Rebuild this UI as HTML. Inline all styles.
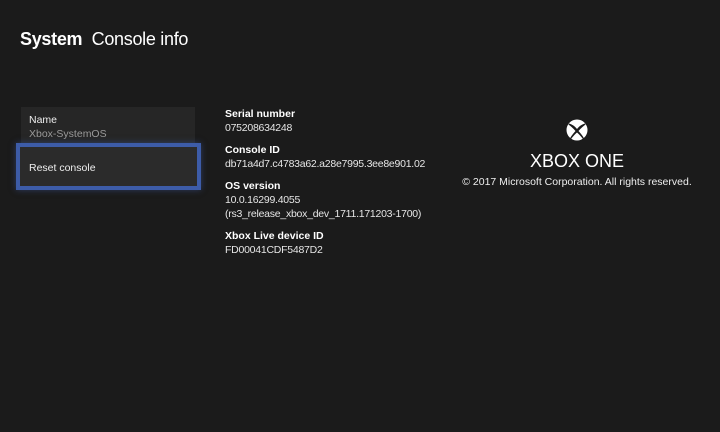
<!DOCTYPE html><html><head><style>
body{margin:0;width:720px;height:432px;background:#1b1b1b;color:#fff;font-family:"Liberation Sans",sans-serif;position:relative;overflow:hidden}
.a{position:absolute;white-space:nowrap}
.l{font-size:10.5px;font-weight:bold;color:#fff}
.v{font-size:10.5px;color:#e6e6e6;letter-spacing:-0.25px}
</style></head><body>
<div class="a" style="left:20px;top:29px;font-size:18px;letter-spacing:-0.3px"><b>System</b>&nbsp; Console info</div>
<div class="a" style="left:21px;top:107px;width:174px;height:38px;background:#262626"></div>
<div class="a" style="left:29px;top:114px;font-size:10.5px;color:#eee">Name</div>
<div class="a" style="left:29px;top:128px;font-size:10.5px;color:#9a9a9a">Xbox-SystemOS</div>
<div class="a" style="left:16px;top:143px;width:177px;height:39px;background:#2b2b2b;border:4px solid #3d5ca8;box-shadow:0 0 6px rgba(61,92,168,.5)"></div>
<div class="a" style="left:29px;top:162px;font-size:10.5px;color:#eee">Reset console</div>
<div class="a l" style="left:225px;top:108px">Serial number</div>
<div class="a v" style="left:225px;top:122px">075208634248</div>
<div class="a l" style="left:225px;top:144px">Console ID</div>
<div class="a v" style="left:225px;top:158px">db71a4d7.c4783a62.a28e7995.3ee8e901.02</div>
<div class="a l" style="left:225px;top:180px">OS version</div>
<div class="a v" style="left:225px;top:194px">10.0.16299.4055</div>
<div class="a v" style="left:225px;top:208px">(rs3_release_xbox_dev_1711.171203-1700)</div>
<div class="a l" style="left:225px;top:230px">Xbox Live device ID</div>
<div class="a v" style="left:225px;top:244px">FD00041CDF5487D2</div>
<svg class="a" style="left:566px;top:119px" width="22" height="22" viewBox="0 0 22 22"><circle cx="11" cy="11" r="10.5" fill="#fff"/><path d="M3 4.5 Q8 6 11 10 Q14 6 19 4.5 L19.5 5.5 Q15 9 12.5 12 Q17 17 18 19.5 L17 20 Q13 15 11 13.5 Q9 15 5 20 L4 19.5 Q5 17 9.5 12 Q7 9 2.5 5.5Z" fill="#1b1b1b"/></svg>
<div class="a" style="left:450px;top:151px;width:254px;text-align:center;font-size:18px">XBOX ONE</div>
<div class="a" style="left:450px;top:176px;width:254px;text-align:center;font-size:10.5px;color:#eee">© 2017 Microsoft Corporation. All rights reserved.</div>
</body></html>
